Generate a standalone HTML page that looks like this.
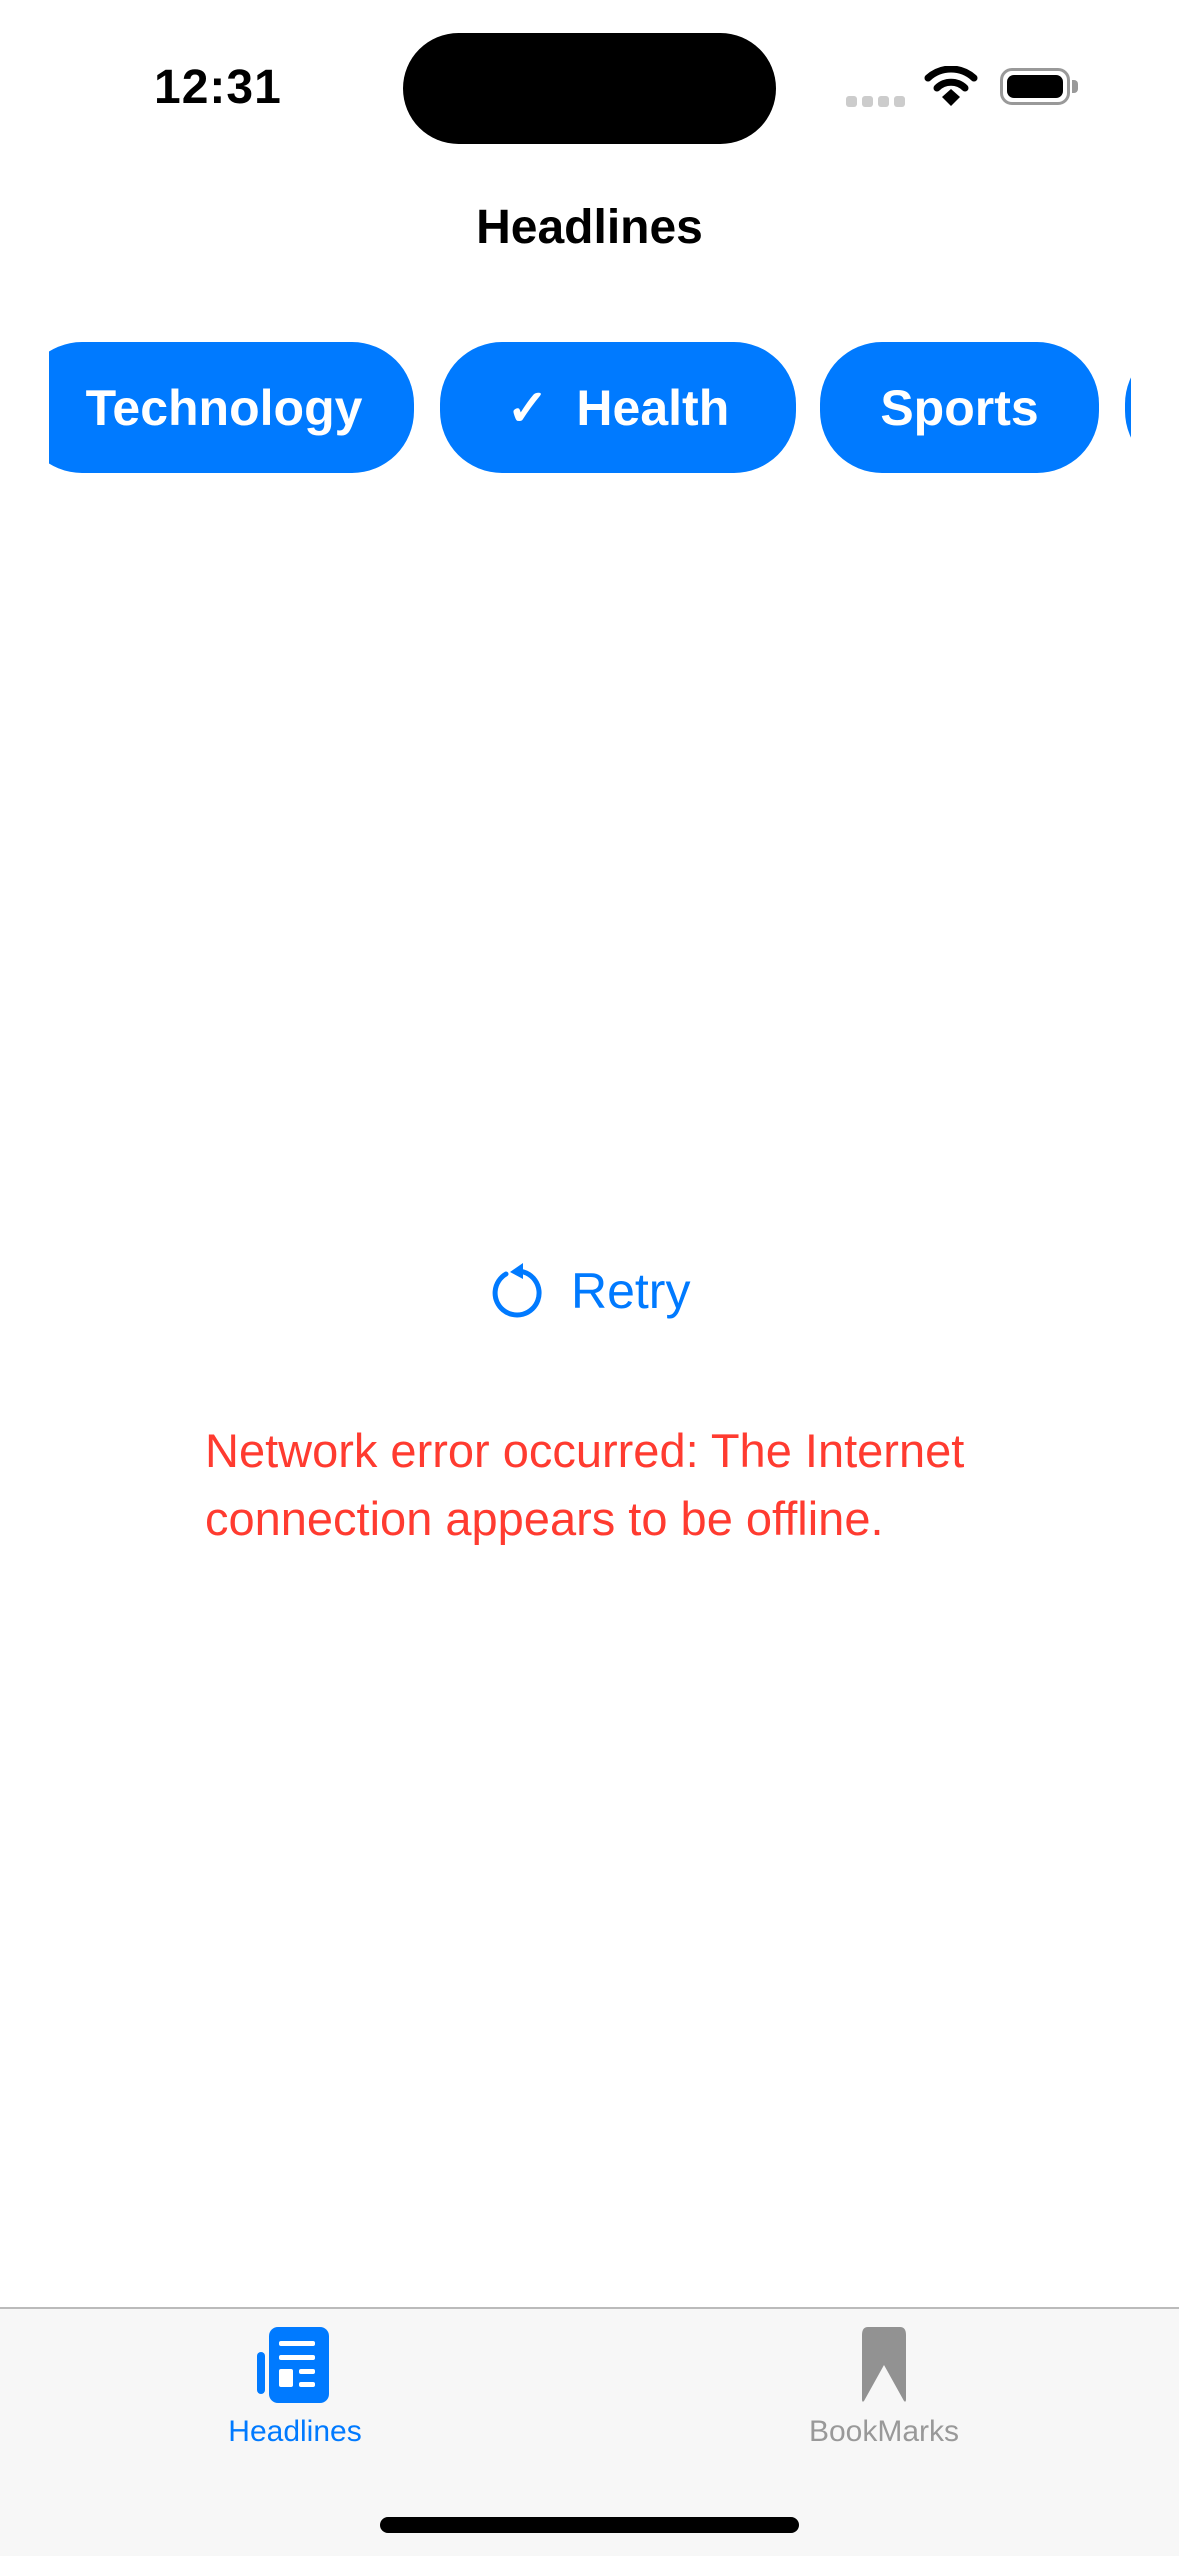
<!DOCTYPE html>
<html><head><meta charset="utf-8"><style>
*{margin:0;padding:0;box-sizing:border-box}
body{width:1179px;height:2556px;background:#fff;position:relative;overflow:hidden;font-family:"Liberation Sans",sans-serif}
.a{position:absolute}
.chip{position:absolute;top:342px;height:131px;background:#007AFF;border-radius:62px;color:#fff;font-size:50px;font-weight:bold;display:flex;align-items:center;justify-content:center}
</style></head><body>
<div class="a" style="left:154px;top:60px;font-size:48px;font-weight:bold;letter-spacing:1px">12:31</div>
<div class="a" style="left:403px;top:33px;width:373px;height:111px;background:#000;border-radius:56px"></div>
<div class="a" style="left:846px;top:96px;width:11px;height:11px;border-radius:3px;background:#ccc"></div>
<div class="a" style="left:862px;top:96px;width:11px;height:11px;border-radius:3px;background:#ccc"></div>
<div class="a" style="left:878px;top:96px;width:11px;height:11px;border-radius:3px;background:#ccc"></div>
<div class="a" style="left:894px;top:96px;width:11px;height:11px;border-radius:3px;background:#ccc"></div>
<svg class="a" style="left:924px;top:66px" width="54" height="42" viewBox="0 0 54 42"><path d="M4 12 A34 34 0 0 1 50 12" stroke="#000" stroke-width="7" fill="none" stroke-linecap="round"/><path d="M13 22 A20 20 0 0 1 41 22" stroke="#000" stroke-width="7" fill="none" stroke-linecap="round"/><path d="M18 31 L27 23 L36 31 L27 40 Z" fill="#000"/></svg>
<div class="a" style="left:1000px;top:68px;width:70px;height:37px;border:3px solid #999;border-radius:12px;padding:4px"><div style="width:100%;height:100%;background:#000;border-radius:7px"></div></div>
<div class="a" style="left:1072px;top:80px;width:6px;height:13px;background:#999;border-radius:0 4px 4px 0"></div>
<div class="a" style="left:0;width:1179px;top:200px;text-align:center;font-size:48px;font-weight:bold">Headlines</div>
<div class="a" style="left:49px;top:330px;width:1082px;height:160px;overflow:hidden">
<div class="chip" style="left:-29px;width:394px;padding-left:14px;top:12px">Technology</div>
<div class="chip" style="left:391px;width:356px;top:12px">✓&nbsp;&nbsp;Health</div>
<div class="chip" style="left:771px;width:279px;top:12px">Sports</div>
<div class="chip" style="left:1076px;width:200px;top:12px"></div>
</div>
<svg class="a" style="left:487px;top:1260px" width="58" height="60" viewBox="0 0 58 60"><path d="M19 14 A22 22 0 1 0 30 11" stroke="#007AFF" stroke-width="5" fill="none" stroke-linecap="round"/><path d="M36 3 L23 12 L36 19 Z" fill="#007AFF"/></svg>
<div class="a" style="left:571px;top:1262px;font-size:50px;color:#007AFF">Retry</div>
<div class="a" style="left:205px;top:1417px;font-size:47px;line-height:68px;color:#FF3B30">Network error occurred: The Internet<br>connection appears to be offline.</div>
<div class="a" style="left:0;top:2307px;width:1179px;height:249px;background:#f7f7f7;border-top:2px solid #bbb"></div>
<svg class="a" style="left:255px;top:2327px" width="80" height="76" viewBox="0 0 80 76"><rect x="2" y="25" width="8" height="42" rx="4" fill="#007AFF"/><rect x="14" y="0" width="60" height="76" rx="9" fill="#007AFF"/><rect x="24" y="14" width="36" height="5" rx="2" fill="#fff"/><rect x="24" y="28" width="36" height="5" rx="2" fill="#fff"/><rect x="24" y="42" width="14" height="18" rx="2" fill="#fff"/><rect x="44" y="42" width="16" height="5" rx="2" fill="#fff"/><rect x="44" y="55" width="16" height="5" rx="2" fill="#fff"/></svg>
<div class="a" style="left:195px;width:200px;top:2415px;text-align:center;font-size:30px;color:#007AFF">Headlines</div>
<svg class="a" style="left:860px;top:2327px" width="48" height="76" viewBox="0 0 48 76"><path d="M8 0 H40 Q46 0 46 8 V72 Q46 76 44 74 L24 38 L4 74 Q2 76 2 72 V8 Q2 0 8 0 Z" fill="#929292"/></svg>
<div class="a" style="left:784px;width:200px;top:2415px;text-align:center;font-size:30px;color:#999">BookMarks</div>
<div class="a" style="left:380px;top:2517px;width:419px;height:16px;background:#000;border-radius:8px"></div>
</body></html>
